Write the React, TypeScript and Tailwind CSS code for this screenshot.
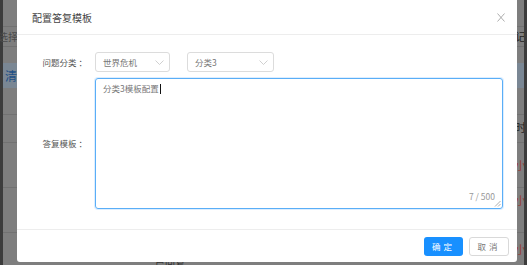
const font = { fontFamily: '"Noto Sans CJK SC", "Noto Sans", sans-serif' };

function Chevron() {
  return (
    <svg width="9" height="5" viewBox="0 0 9 5" fill="none">
      <path d="M0.5 0.5 L4.5 4.5 L8.5 0.5" stroke="#c4c4c4" strokeWidth="0.8" />
    </svg>
  );
}

function Select({ value, width }: { value: string; width: string }) {
  return (
    <div
      className={`flex h-[20px] items-center justify-between rounded-[3px] border border-[#dcdcdc] bg-white pl-[7px] pr-[5px] text-[8.5px] text-[#777] ${width}`}
    >
      <span>{value}</span>
      <Chevron />
    </div>
  );
}

// dimmed page behind the modal
const rows = [
  { h: 'h-[27px]', left: '', right: '', line: true },
  { h: 'h-[20px]', left: '选择', right: '记', line: true },
  { h: 'h-[16px]', left: '', right: '', line: false },
  { h: 'h-[25px]', left: '清', right: '', line: false, blue: true },
  { h: 'h-[27px]', left: '', right: '', line: true },
  { h: 'h-[28px]', left: '', right: '时', line: true, top: true },
  { h: 'h-[45px]', left: '', right: '小', line: true, red: true },
  { h: 'h-[45px]', left: '', right: '小', line: true, red: true, top: true },
  { h: 'h-[32px]', left: '', right: '小', line: false, red: true },
];

export default function App() {
  return (
    <div className="relative h-[265px] w-[527px] overflow-hidden bg-[#7e7e7e]" style={font}>
      <div className="flex h-full">
        <div className="w-[3px] bg-[#3c3c3c]" />
        <div className="flex flex-1 flex-col">
          {rows.map((r, i) => (
            <div
              key={i}
              className={`flex justify-between ${r.top ? 'items-start pt-[4px]' : 'items-center'} ${r.h} ${r.line ? 'border-b border-[#717171]' : ''} ${r.blue ? 'bg-[#7a8794]' : ''}`}
            >
              <span
                className={`text-[10px] ${r.blue ? 'ml-[2px] text-[12px] text-[#1d4f86]' : '-ml-[5px] text-[#4c4c4c]'}`}
              >
                {r.left}
              </span>
              <span
                className={`-mr-[2px] text-[11px] ${r.red ? 'text-[#9a3a36]' : 'text-[#222]'}`}
              >
                {r.right}
              </span>
            </div>
          ))}
        </div>
        <div className="w-[3px] bg-[#3c3c3c]" />
      </div>
      <div className="absolute bottom-[-5px] left-[155px] text-[10px] text-[#333]">已回复</div>

      {/* modal */}
      <div className="absolute left-[17px] top-0 flex h-[262px] w-[500px] flex-col rounded-b-[3px] bg-white">
        <div className="flex h-[35px] shrink-0 items-center justify-between border-b border-[#ededed] pl-[15px] pr-[12px]">
          <span className="text-[10px] text-[#444]">配置答复模板</span>
          <svg width="8" height="9" viewBox="0 0 8 9" fill="none">
            <path d="M0.5 0.5 L7.5 8.5 M7.5 0.5 L0.5 8.5" stroke="#999" strokeWidth="0.8" />
          </svg>
        </div>

        <div className="flex flex-1 flex-col gap-[6px] pt-[17px]">
          <div className="flex items-center">
            <span className="w-[70px] text-right text-[8.5px] text-[#555]">
              问题分类<span className="ml-[2px]">：</span>
            </span>
            <div className="ml-[8px] flex gap-[17px]">
              <Select value="世界危机" width="w-[75px]" />
              <Select value="分类3" width="w-[87px]" />
            </div>
          </div>
          <div className="flex items-center">
            <span className="w-[70px] text-right text-[8.5px] text-[#555]">
              答复模板<span className="ml-[2px]">：</span>
            </span>
            <div className="relative ml-[8px] h-[131px] w-[408px] rounded-[3px] border border-[#5aaef7] px-[7px] pt-[3px] text-[8.5px] text-[#777] shadow-[0_0_0_1px_rgba(24,144,255,0.15)]">
              <span>分类3模板配置</span>
              <span className="ml-[1px] inline-block h-[10px] w-[1px] translate-y-[2px] bg-[#111]" />
              <span className="absolute bottom-[5px] right-[7px] text-[8.5px] text-[#999]">7 / 500</span>
              <svg
                className="absolute bottom-[1px] right-[1px]"
                width="7"
                height="7"
                viewBox="0 0 7 7"
                fill="none"
              >
                <path d="M6.5 1 L1 6.5 M6.5 4 L4 6.5" stroke="#999" strokeWidth="0.8" />
              </svg>
            </div>
          </div>
        </div>

        <div className="flex h-[33px] shrink-0 items-center justify-end gap-[6px] border-t border-[#ededed] pr-[8px]">
          <button className="h-[19px] w-[39px] rounded-[3px] bg-[#1890ff] text-[8.5px] tracking-[3px] text-white">
            确定
          </button>
          <button className="h-[19px] w-[40px] rounded-[3px] border border-[#d9d9d9] bg-white text-[8.5px] tracking-[3px] text-[#777]">
            取消
          </button>
        </div>
      </div>
    </div>
  );
}
